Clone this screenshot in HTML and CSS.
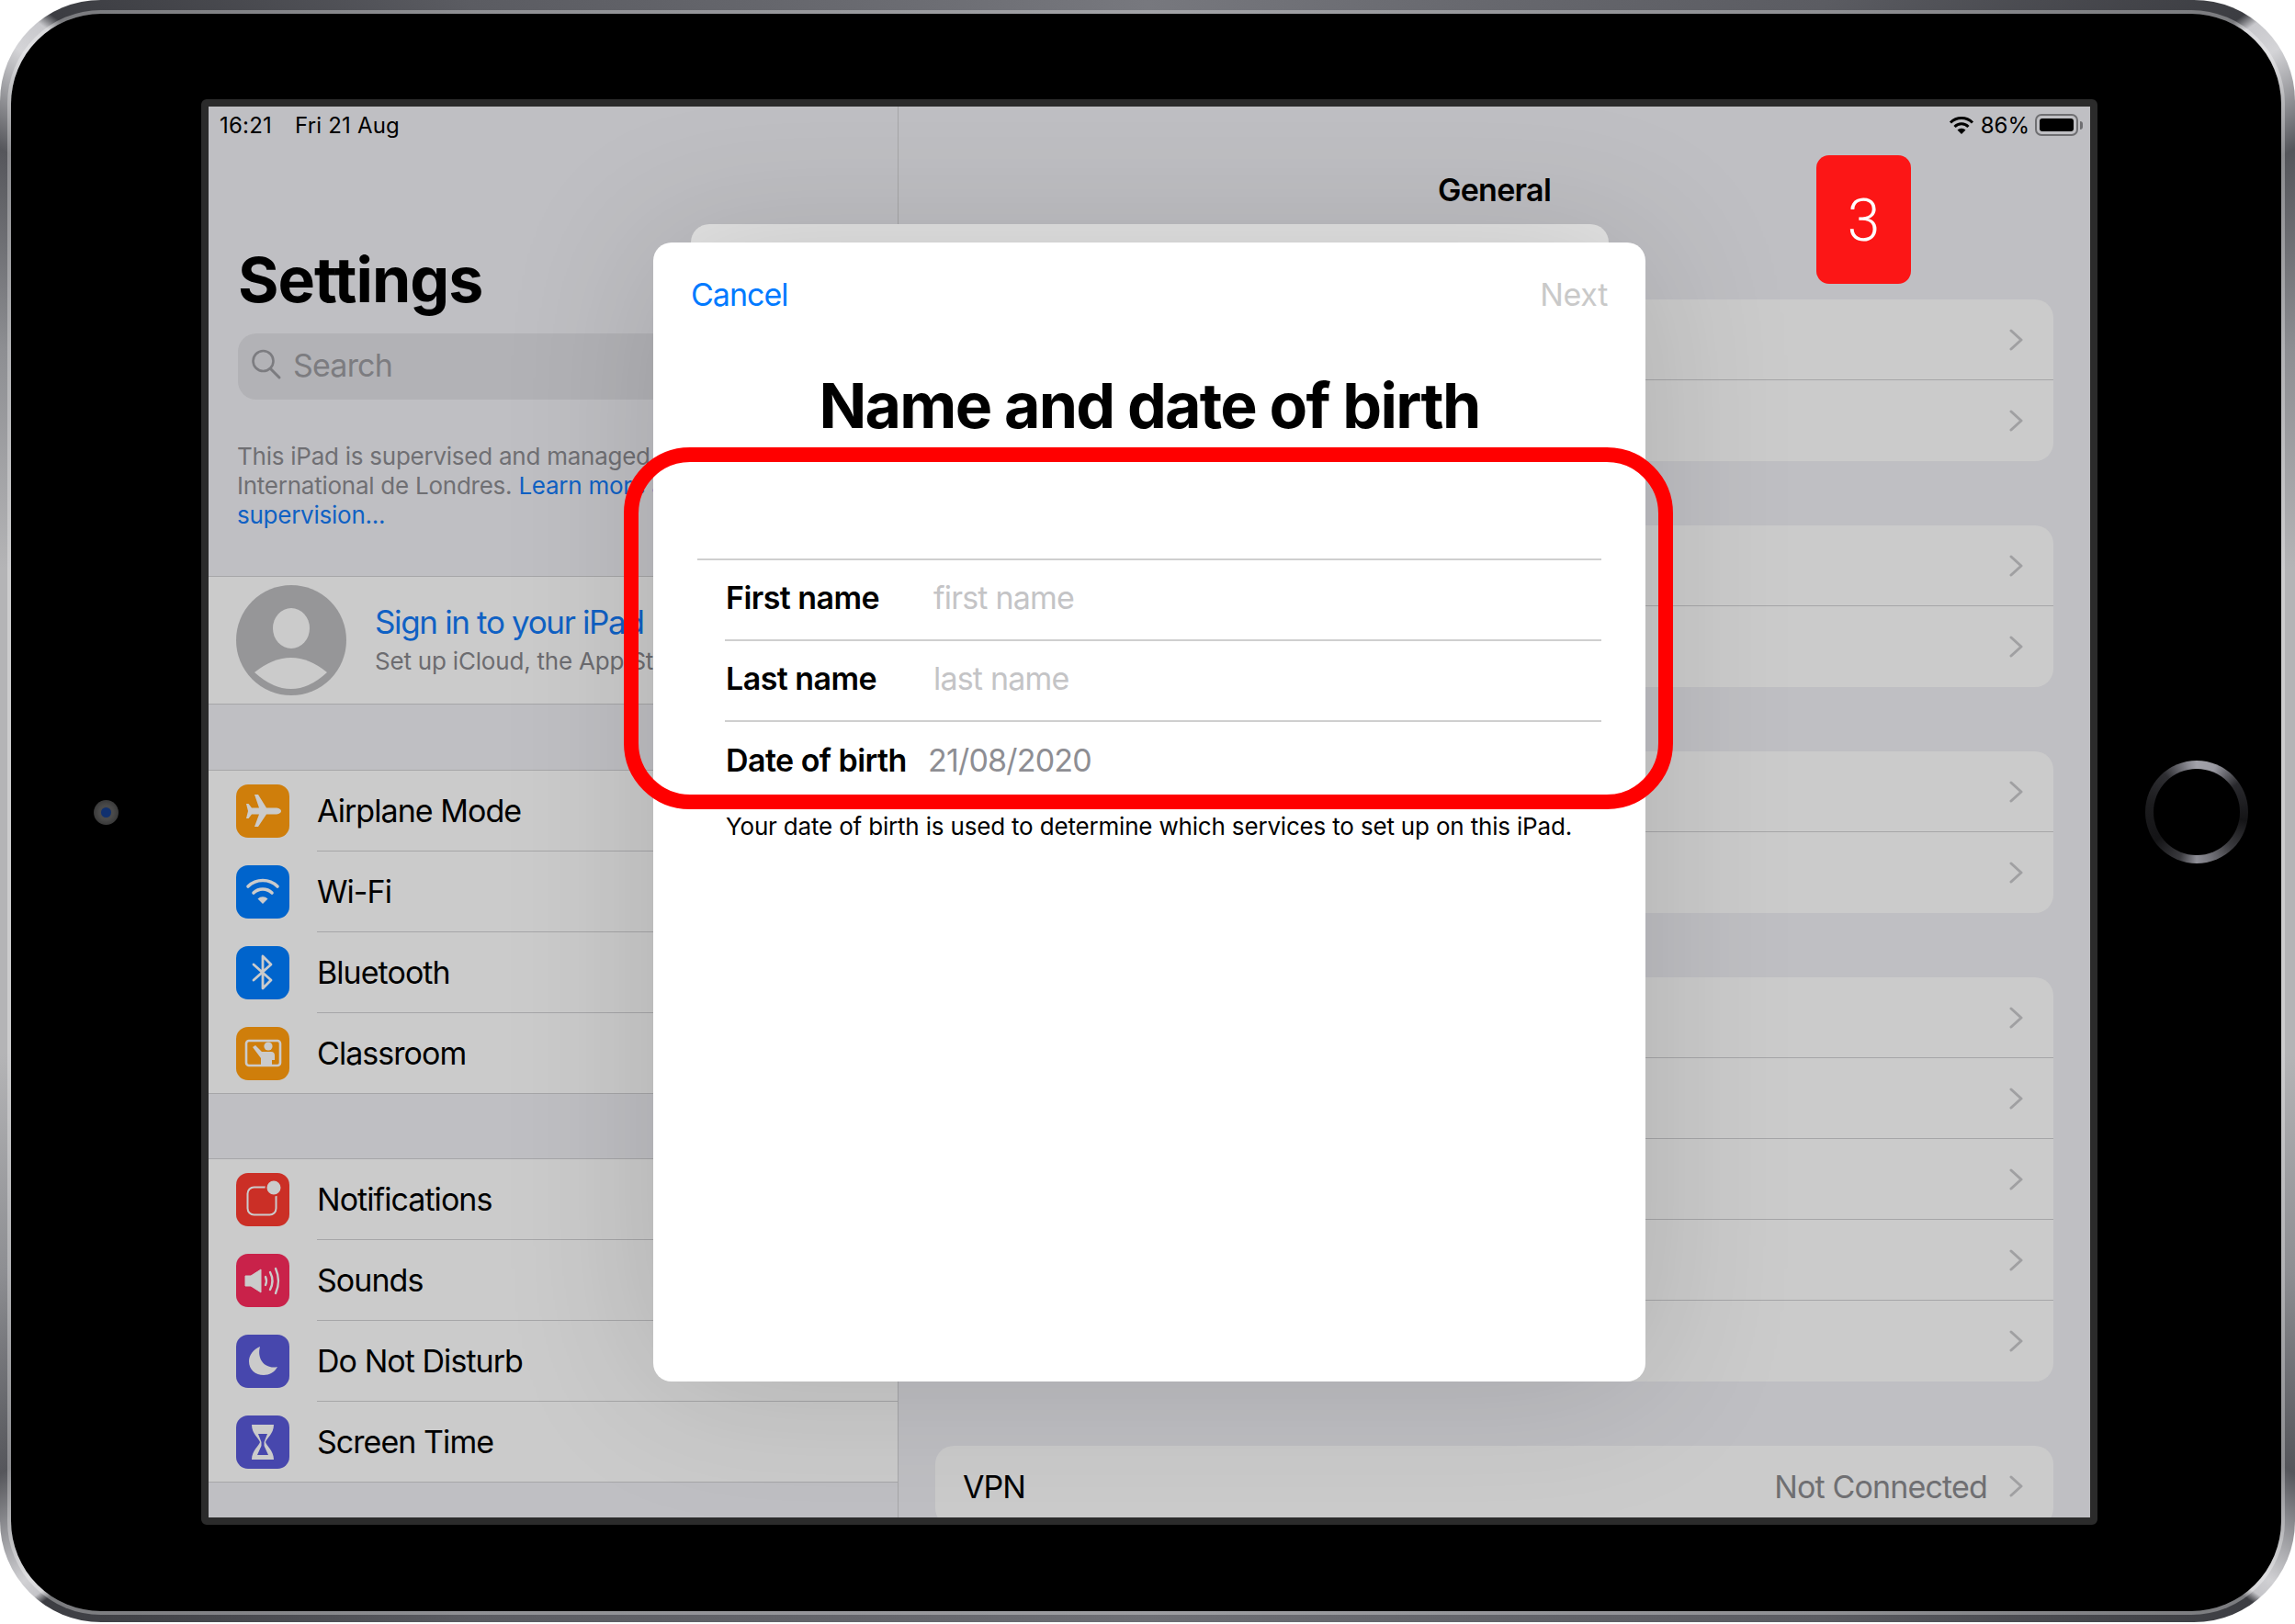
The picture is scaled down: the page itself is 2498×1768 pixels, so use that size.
FILE: index.html
```html
<!DOCTYPE html>
<html lang="en">
<head>
    <meta charset="UTF-8">
    <title>Name and date of birth</title>
    <link rel="stylesheet" href="styles.css">
</head>
<body>
    <svg class="sprite" width="0" height="0">
        <symbol id="chev" viewBox="0 0 15 24">
            <path d="M2 2 L13 12 L2 22" fill="none" stroke="currentColor" stroke-width="3" stroke-linecap="round" stroke-linejoin="round"/>
        </symbol>
    </svg>

    <div class="device">
        <div class="front">
            <div class="camera"><div class="lens"></div></div>

            <div class="bezel">
                <div class="screen">

                    <!-- left column -->
                    <div class="sidebar">
                        <div class="status status-left"><span>16:21</span><span>Fri 21 Aug</span></div>
                        <h1 class="big-title">Settings</h1>
                        <div class="search">
                            <svg width="34" height="34" viewBox="0 0 34 34"><circle cx="13.5" cy="13" r="11" fill="none" stroke="#7c7c80" stroke-width="2.6"/><path d="M21.5 21.5 L31 31" stroke="#7c7c80" stroke-width="3" stroke-linecap="round"/></svg>
                            <span>Search</span>
                        </div>
                        <p class="supervised">This iPad is supervised and managed by Lycée<br>International de Londres. <a>Learn more about</a><br><a>supervision...</a></p>

                        <div class="profile">
                            <svg class="avatar" width="120" height="120" viewBox="0 0 120 120">
                                <circle cx="60" cy="60" r="60" fill="#969698"/>
                                <ellipse cx="60" cy="47" rx="20" ry="22" fill="#cbcbcb"/>
                                <path d="M20 95 Q60 63 99 95 Q60 131 20 95 Z" fill="#cbcbcb"/>
                            </svg>
                            <div class="profile-text">
                                <div class="profile-name">Sign in to your iPad</div>
                                <div class="profile-sub">Set up iCloud, the App Store</div>
                            </div>
                        </div>

                        <div class="menu">
                            <div class="menu-row">
                                <div class="app-icon orange">
                                    <svg viewBox="0 0 58 58"><path d="M49 29 C49 27 46 25.5 43 25.5 H33 L24 11 H20 L25 25.5 H17 L13.5 21 H11 L13 29 L11 37 H13.5 L17 32.5 H25 L20 46 H24 L33 32.5 H43 C46 32.5 49 31 49 29 Z" fill="#cbcbcb"/></svg>
                                </div>
                                <div class="menu-label">Airplane Mode</div>
                            </div>
                            <div class="menu-row">
                                <div class="app-icon blue">
                                    <svg viewBox="0 0 58 58"><g fill="none" stroke="#cbcbcb" stroke-width="3.6" stroke-linecap="round"><path d="M13 23 A23 23 0 0 1 45 23"/><path d="M19 30 A14.5 14.5 0 0 1 39 30"/></g><path d="M29 42 L23.5 36.5 A8 8 0 0 1 34.5 36.5 Z" fill="#cbcbcb"/></svg>
                                </div>
                                <div class="menu-label">Wi-Fi</div>
                            </div>
                            <div class="menu-row">
                                <div class="app-icon blue">
                                    <svg viewBox="0 0 58 58"><path d="M19 20 L38 37 L29 46 V11 L38 20 L19 37" fill="none" stroke="#cbcbcb" stroke-width="2.8" stroke-linejoin="round" stroke-linecap="round"/></svg>
                                </div>
                                <div class="menu-label">Bluetooth</div>
                            </div>
                            <div class="menu-row">
                                <div class="app-icon orange">
                                    <svg viewBox="0 0 58 58"><rect x="11" y="15" width="37" height="27" rx="3" fill="none" stroke="#cbcbcb" stroke-width="2.6"/><circle cx="35" cy="21" r="4.6" fill="#cbcbcb"/><path d="M18 22 L21 20 L28 27 H38 C41 27 42 29 42 31 V36 H39 V42 H27 V34 Z" fill="#cbcbcb"/></svg>
                                </div>
                                <div class="menu-label">Classroom</div>
                            </div>
                        </div>

                        <div class="menu">
                            <div class="menu-row">
                                <div class="app-icon red">
                                    <svg viewBox="0 0 58 58"><rect x="12.5" y="15.5" width="31" height="30" rx="7" fill="none" stroke="#cbcbcb" stroke-width="2"/><circle cx="41" cy="16" r="8.5" fill="#cbcbcb" stroke="#cb2f26" stroke-width="2"/></svg>
                                </div>
                                <div class="menu-label">Notifications</div>
                            </div>
                            <div class="menu-row">
                                <div class="app-icon pink">
                                    <svg viewBox="0 0 58 58"><path d="M10 24 H16 L27 17 V42 L16 35 H10 Z" fill="#cbcbcb" stroke="#cbcbcb" stroke-linejoin="round" stroke-width="1"/><g fill="none" stroke="#cbcbcb" stroke-width="2.4" stroke-linecap="round"><path d="M32 25 Q34 29.5 32 34"/><path d="M37 20 Q42 29.5 37 39"/><path d="M43 16 Q49 29.5 43 43"/></g></svg>
                                </div>
                                <div class="menu-label">Sounds</div>
                            </div>
                            <div class="menu-row">
                                <div class="app-icon indigo">
                                    <svg viewBox="0 0 58 58"><path d="M26 13 C19 16 14 22 14 29 C14 38 21 44 30 44 C36 44 42 41 45 35 C33 38 22 28 26 13 Z" fill="#cbcbcb"/></svg>
                                </div>
                                <div class="menu-label">Do Not Disturb</div>
                            </div>
                            <div class="menu-row">
                                <div class="app-icon indigo">
                                    <svg viewBox="0 0 58 58"><path d="M17 10 H41 C41 20 33 25 32 29 C33 33 41 38 41 48 H17 C17 38 25 33 26 29 C25 25 17 20 17 10 Z" fill="#cbcbcb"/><path d="M24 20 H34 L30.5 29 V33 L35 43 H23 L27.5 33 V29 Z" fill="#4747ad"/></svg>
                                </div>
                                <div class="menu-label">Screen Time</div>
                            </div>
                        </div>
                    </div>

                    <!-- right column -->
                    <div class="detail">
                        <div class="status status-right">
                            <svg width="28" height="20" viewBox="0 0 28 20"><g fill="none" stroke="#000" stroke-width="3"><path d="M2 7.5 A17 17 0 0 1 26 7.5"/><path d="M6.500 12 A10.500 10.500 0 0 1 21.500 12"/></g><path d="M14 20 L9.5 15.5 A6.4 6.4 0 0 1 18.500 15.5 Z" fill="#000"/></svg>
                            <span>86%</span>
                            <div class="battery"><div class="battery-level"></div></div>
                            <div class="battery-nub"></div>
                        </div>
                        <div class="nav-title">General</div>
                        <div class="groups">
                            <div class="group">
                                <div class="group-row"><svg class="chev"><use href="#chev"/></svg></div>
                                <div class="group-row"><svg class="chev"><use href="#chev"/></svg></div>
                            </div>
                            <div class="group">
                                <div class="group-row"><svg class="chev"><use href="#chev"/></svg></div>
                                <div class="group-row"><svg class="chev"><use href="#chev"/></svg></div>
                            </div>
                            <div class="group">
                                <div class="group-row"><svg class="chev"><use href="#chev"/></svg></div>
                                <div class="group-row"><svg class="chev"><use href="#chev"/></svg></div>
                            </div>
                            <div class="group">
                                <div class="group-row"><svg class="chev"><use href="#chev"/></svg></div>
                                <div class="group-row"><svg class="chev"><use href="#chev"/></svg></div>
                                <div class="group-row"><svg class="chev"><use href="#chev"/></svg></div>
                                <div class="group-row"><svg class="chev"><use href="#chev"/></svg></div>
                                <div class="group-row"><svg class="chev"><use href="#chev"/></svg></div>
                            </div>
                            <div class="group">
                                <div class="group-row">
                                    <span class="row-name">VPN</span>
                                    <span class="row-value">Not Connected</span>
                                    <svg class="chev"><use href="#chev"/></svg>
                                </div>
                            </div>
                        </div>
                    </div>

                    <!-- sheet over everything -->
                    <div class="back-sheet"></div>
                    <div class="sheet">
                        <div class="sheet-nav">
                            <span class="cancel">Cancel</span>
                            <span class="next">Next</span>
                        </div>
                        <h2 class="sheet-title">Name and date of birth</h2>
                        <div class="form">
                            <div class="field">
                                <div class="field-inner">
                                    <span class="field-label">First name</span>
                                    <span class="placeholder">first name</span>
                                </div>
                            </div>
                            <div class="field">
                                <div class="field-inner">
                                    <span class="field-label">Last name</span>
                                    <span class="placeholder">last name</span>
                                </div>
                            </div>
                            <div class="field">
                                <div class="field-inner no-line">
                                    <span class="field-label date-label">Date of birth</span>
                                    <span class="date-value">21/08/2020</span>
                                </div>
                            </div>
                        </div>
                        <p class="form-note">Your date of birth is used to determine which services to set up on this iPad.</p>
                    </div>

                    <div class="step-badge">3</div>
                    <div class="highlight"></div>
                </div>
            </div>

            <div class="home-button"><div class="home-inner"></div></div>
        </div>
    </div>
</body>
</html>
```

FILE: styles.css
```css
* {
    box-sizing: border-box;
}

body {
    margin: 0;
    background-color: #fff;
    font-family: Inter, "Liberation Sans", sans-serif;
    color: #000;
}

.sprite {
    display: block;
    height: 0;
}

/* device shell */
.device {
    width: 2498px;
    height: 1766px;
    padding: 11px 11px 8px 8px;
    border-radius: 110px;
    background: conic-gradient(#77787e 0deg, #5b5c62 40deg, #3c3d42 54deg, #c8c8cc 54.6deg, #d4d4d7 56deg, #55565b 60deg, #8d8e92 68deg, #b4b4b6 78deg, #b4b4b6 102deg, #8d8e92 112deg, #55565b 120deg, #d0d0d3 124.400deg, #c4c4c8 125.200deg, #3c3d42 125.600deg, #5b5c62 140deg, #6e6f75 180deg, #5b5c62 220deg, #3c3d42 234.400deg, #c4c4c8 234.800deg, #d0d0d3 235.600deg, #55565b 240deg, #8d8e92 248deg, #b4b4b6 258deg, #b4b4b6 282deg, #8d8e92 292deg, #55565b 300deg, #d4d4d7 304deg, #c8c8cc 305.400deg, #3c3d42 306deg, #5b5c62 320deg, #77787e 360deg);
}

.front {
    height: 100%;
    display: grid;
    grid-template-columns: 207px 2064px 200px;
    align-items: center;
    justify-items: center;
    padding-top: 93px;
    padding-bottom: 94px;
    border: 4px solid rgba(255, 255, 255, 0.32);
    border-radius: 102px;
    background-color: #000;
    background-clip: padding-box;
}

.camera {
    width: 27px;
    height: 27px;
    display: flex;
    align-items: center;
    justify-content: center;
    border-radius: 50%;
    background: radial-gradient(circle, #4a4a4a 40%, #2a2a2a 100%);
}

.lens {
    width: 11px;
    height: 11px;
    border-radius: 50%;
    background-color: #10306f;
}

.home-button {
    justify-self: start;
    margin-left: 52px;
    width: 112px;
    height: 112px;
    padding: 9px;
    border-radius: 50%;
    background: conic-gradient(#a2a2aa 0deg, #9a9aa2 22deg, #2a2a2e 55deg, #141416 100deg, #3a3a3e 135deg, #77777e 165deg, #8e8e96 180deg, #3a3a3e 200deg, #141416 235deg, #1c1c1e 280deg, #2e2e32 320deg, #8a8a92 350deg, #a2a2aa 360deg);
}

.home-inner {
    width: 100%;
    height: 100%;
    border-radius: 50%;
    background-color: #000;
}

.bezel {
    width: 2064px;
    height: 1552px;
    border: 8px solid #2b2b2b;
    border-radius: 6px;
}

.screen {
    position: relative;
    width: 2048px;
    height: 1536px;
    display: flex;
    overflow: hidden;
    background-color: #bfbfc3;
}

/* status bar */
.status {
    height: 40px;
    display: flex;
    align-items: center;
    font-size: 24px;
    font-weight: 400;
}

.status-left {
    gap: 25px;
    padding-left: 12px;
    letter-spacing: 0.2px;
}

.status-right {
    justify-content: flex-end;
    padding-right: 8px;
}

.status-right span {
    margin-left: 7px;
}

.battery {
    width: 47px;
    height: 24px;
    margin-left: 6px;
    padding: 3px;
    border: 2px solid #6f6f72;
    border-radius: 7px;
}

.battery-level {
    width: 37px;
    height: 100%;
    border-radius: 3px;
    background-color: #000;
}

.battery-nub {
    width: 3px;
    height: 9px;
    margin-left: 2px;
    border-radius: 0 3px 3px 0;
    background-color: #6f6f72;
}

/* sidebar */
.sidebar {
    width: 751px;
    flex-shrink: 0;
    border-right: 1px solid #a6a6a8;
}

.big-title {
    margin: 0;
    height: 207px;
    padding: 108px 0 0 32px;
    font-size: 68px;
    line-height: 80px;
    font-weight: 700;
    letter-spacing: -1px;
}

.search {
    height: 72px;
    margin: 0 32px;
    padding: 0 0 4px 14px;
    display: flex;
    align-items: center;
    gap: 12px;
    border-radius: 20px;
    background-color: #b2b2b6;
    font-size: 34px;
    letter-spacing: -0.8px;
    color: #7c7c80;
}

.supervised {
    margin: 46px 0 50px;
    padding-left: 31px;
    font-size: 26px;
    line-height: 32px;
    letter-spacing: -0.25px;
    color: #6f6f73;
}

.supervised a {
    color: #0f61c4;
}

.profile {
    height: 140px;
    display: flex;
    align-items: center;
    padding-left: 30px;
    border-top: 1px solid #a6a6a8;
    border-bottom: 1px solid #a6a6a8;
    background-color: #cbcbcb;
    white-space: nowrap;
}

.profile-text {
    margin-left: 31px;
    padding-bottom: 3px;
}

.profile-name {
    font-size: 35px;
    line-height: 44px;
    letter-spacing: -1.35px;
    color: #0f61c4;
}

.profile-sub {
    margin-top: 5px;
    font-size: 26px;
    line-height: 32px;
    letter-spacing: -0.2px;
    color: #6c6c70;
}

.menu {
    margin-top: 70px;
    border-top: 1px solid #a6a6a8;
    border-bottom: 1px solid #a6a6a8;
    background-color: #cbcbcb;
}

.profile + .menu {
    margin-top: 71px;
}

.menu-row {
    height: 88px;
    display: flex;
    align-items: center;
    padding-left: 30px;
}

.menu-row:last-child {
    height: 87px;
}

.app-icon {
    width: 58px;
    height: 58px;
    flex-shrink: 0;
    margin-right: 30px;
    border-radius: 13px;
}

.app-icon svg {
    display: block;
    width: 58px;
    height: 58px;
}

.orange { background-color: #cf7e0b; }
.blue { background-color: #0064cc; }
.red { background-color: #cb2f26; }
.pink { background-color: #c9224a; }
.indigo { background-color: #4747ad; }

.menu-label {
    flex: 1;
    height: 100%;
    display: flex;
    align-items: center;
    border-bottom: 1px solid #a6a6a8;
    font-size: 34px;
    letter-spacing: -0.95px;
}

.menu-row:last-child .menu-label {
    border-bottom: none;
}

/* detail pane */
.detail {
    flex: 1;
}

.nav-title {
    height: 170px;
    padding-top: 31px;
    text-align: center;
    font-size: 34px;
    line-height: 40px;
    font-weight: 600;
    letter-spacing: -0.7px;
}

.groups {
    display: flex;
    flex-direction: column;
    gap: 70px;
    padding: 0 40px;
}

.group {
    border-radius: 20px;
    background-color: #cbcbcb;
}

.group-row {
    height: 88px;
    display: flex;
    align-items: center;
    justify-content: flex-end;
    padding: 0 33px 0 30px;
    border-bottom: 1px solid #a6a6a8;
}

.group-row:last-child {
    border-bottom: none;
}

.row-name {
    margin-right: auto;
    font-size: 34px;
    letter-spacing: -1px;
}

.row-value {
    margin-right: 24px;
    font-size: 34px;
    letter-spacing: -0.85px;
    color: #6f6f72;
}

.chev {
    width: 15px;
    height: 24px;
    color: #a0a0a2;
}

/* the sheet */
.back-sheet {
    position: absolute;
    left: 525px;
    top: 128px;
    width: 999px;
    height: 100px;
    border-radius: 20px;
    background-color: #e4e4e4;
}

.sheet {
    position: absolute;
    left: 484px;
    top: 148px;
    width: 1080px;
    height: 1240px;
    border-radius: 20px;
    background-color: #fff;
    box-shadow: 0 0 170px rgba(0, 0, 0, 0.14);
}

.sheet-nav {
    height: 112px;
    display: flex;
    align-items: center;
    justify-content: space-between;
    padding: 0 41px;
    font-size: 34px;
}

.cancel {
    letter-spacing: -1px;
    color: #007aff;
}

.next {
    letter-spacing: -0.3px;
    color: #c9c9c9;
}

.sheet-title {
    height: 232px;
    margin: 0;
    padding-top: 30px;
    text-align: center;
    font-size: 68px;
    line-height: 70px;
    font-weight: 700;
    letter-spacing: -1.7px;
}

.form {
    margin: 0 48px;
    border-top: 2px solid #cfcfcf;
}

.field {
    height: 88px;
    padding-left: 30px;
}

.field-inner {
    height: 100%;
    display: flex;
    align-items: center;
    padding-bottom: 6px;
    border-bottom: 2px solid #cfcfcf;
    font-size: 34px;
    letter-spacing: -0.8px;
}

.field-inner.no-line {
    border-bottom: none;
}

.field-label {
    width: 227px;
    padding-left: 1px;
    font-weight: 600;
    letter-spacing: -0.55px;
}

.date-label {
    width: 221px;
}

.placeholder {
    color: #c4c4c6;
}

.date-value {
    color: #8e8e93;
}

.form-note {
    margin: 10px 0 0 79px;
    font-size: 26px;
    line-height: 32px;
    letter-spacing: -0.18px;
}

/* annotations */
.step-badge {
    position: absolute;
    left: 1750px;
    top: 53px;
    width: 103px;
    height: 140px;
    display: flex;
    align-items: center;
    justify-content: center;
    padding-top: 2px;
    border-radius: 14px;
    background-color: #fc1616;
    font-family: Roboto, "Liberation Sans", sans-serif;
    font-size: 64px;
    font-weight: 300;
    color: #fff;
}

.highlight {
    position: absolute;
    left: 452px;
    top: 371px;
    width: 1142px;
    height: 394px;
    border: 16px solid #f00;
    border-radius: 72px;
}
```
